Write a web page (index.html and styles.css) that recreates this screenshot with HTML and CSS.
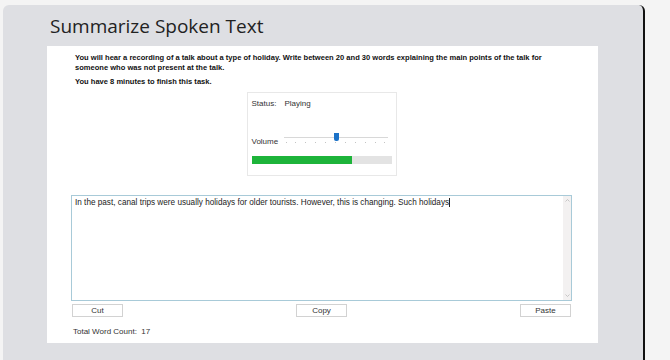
FILE: index.html
```html
<!DOCTYPE html>
<html>
<head>
<meta charset="utf-8">
<link rel="stylesheet" href="styles.css">
</head>
<body>
<div class="card">
  <h1 class="title">Summarize Spoken Text</h1>
  <div class="panel">
    <p class="instr">You will hear a recording of a talk about a type of holiday. Write between 20 and 30 words explaining the main points of the talk for someone who was not present at the talk.</p>
    <p class="instr instr-2">You have 8 minutes to finish this task.</p>
    <div class="player">
      <div class="status"><span class="status-label">Status:</span><span>Playing</span></div>
      <div class="volume">
        <span class="vol-label">Volume</span>
        <div class="slider">
          <div class="track"></div>
          <div class="ticks"><i></i><i></i><i></i><i></i><i></i><i></i><i></i><i></i><i></i><i></i><i></i></div>
          <div class="thumb"></div>
        </div>
      </div>
      <div class="progress"><div class="fill" style="width:72%"></div></div>
    </div>
    <div class="editor">
      <div class="editor-text">In the past, canal trips were usually holidays for older tourists. However, this is changing. Such holidays<span class="caret"></span></div>
      <div class="scrollbar">
        <svg class="arrow" width="5" height="3" viewBox="0 0 5 3"><path d="M0.5 2.5 L2.5 0.5 L4.5 2.5" fill="none" stroke="#bbb" stroke-width="0.8"/></svg>
        <svg class="arrow" width="5" height="3" viewBox="0 0 5 3"><path d="M0.5 0.5 L2.5 2.5 L4.5 0.5" fill="none" stroke="#bbb" stroke-width="0.8"/></svg>
      </div>
    </div>
    <div class="buttons">
      <button class="btn">Cut</button>
      <button class="btn">Copy</button>
      <button class="btn">Paste</button>
    </div>
    <div class="count">Total Word Count:&nbsp; 17</div>
  </div>
</div>
</body>
</html>
```
FILE: styles.css
```css
html, body {
  margin: 0;
  padding: 0;
  background: #f4f4f4;
  height: 360px;
  overflow: hidden;
}
.card {
  margin: 5px 0 0 3px;
  width: 642px;
  height: 355px;
  background: #dedfe3;
  border-right: 2px solid #111;
  border-radius: 6px 6px 0 0;
  padding: 0 0 0 44px;
  box-sizing: border-box;
}
.title {
  margin: 0;
  padding: 9px 0 0 3px;
  height: 32px;
  font-family: "Open Sans", sans-serif;
  font-weight: 400;
  font-size: 19px;
  line-height: 24px;
  color: #222;
}
.panel {
  width: 551px;
  height: 297px;
  background: #fff;
  box-sizing: border-box;
  padding: 7px 26px 0 24px;
  display: flex;
  flex-direction: column;
}
.instr {
  margin: 0 0 0 4px;
  max-width: 475px;
  font-family: "Liberation Sans", Arial, sans-serif;
  font-weight: bold;
  font-size: 7.55px;
  line-height: 10px;
  color: #111;
}
.instr-2 {
  margin-top: 4px;
}
.player {
  align-self: center;
  width: 150px;
  height: 84px;
  margin: 5px 0 0 0;
  border: 1px solid #e8e8e8;
  box-sizing: border-box;
  padding: 5px 5px 0 4px;
  font-family: "Liberation Sans", Arial, sans-serif;
  font-size: 8px;
  color: #333;
  display: flex;
  flex-direction: column;
}
.status {
  display: flex;
  height: 12px;
  line-height: 12px;
}
.status-label {
  width: 33px;
}
.volume {
  display: flex;
  align-items: center;
  margin-top: 24px;
  height: 14px;
}
.vol-label {
  width: 32px;
}
.slider {
  position: relative;
  width: 104px;
  height: 14px;
}
.track {
  position: absolute;
  left: 0;
  right: 0;
  top: 3px;
  height: 1px;
  background: #d8d8d8;
}
.ticks {
  position: absolute;
  left: 2px;
  right: 2px;
  top: 8px;
  display: flex;
  justify-content: space-between;
}
.ticks i {
  width: 1px;
  height: 1px;
  background: #c4c4c4;
}
.thumb {
  position: absolute;
  left: 50px;
  top: -1px;
  width: 5px;
  height: 8px;
  background: #1b72c8;
  border-radius: 0 0 2px 2px;
}
.progress {
  margin-top: 8px;
  width: 140px;
  height: 8px;
  background: #e3e3e3;
}
.fill {
  height: 100%;
  background: #1db43a;
}
.editor {
  margin-top: 19px;
  height: 106px;
  border: 1px solid #a8cad8;
  box-sizing: border-box;
  display: flex;
  background: #fff;
}
.editor-text {
  flex: 1;
  padding: 1px 0 0 3px;
  font-family: "Liberation Sans", Arial, sans-serif;
  font-size: 8.2px;
  line-height: 11px;
  color: #222;
}
.caret {
  display: inline-block;
  width: 1px;
  height: 9px;
  background: #222;
  vertical-align: -2px;
}
.scrollbar {
  width: 8px;
  background: #f3f1f1;
  display: flex;
  flex-direction: column;
  justify-content: space-between;
  align-items: center;
  padding: 3px 0;
}
.arrow {
  display: block;
}
.buttons {
  display: flex;
  justify-content: space-between;
  margin: 3px 1px 0 1px;
}
.btn {
  width: 51px;
  height: 13px;
  padding: 0;
  margin: 0;
  border: 1px solid #d2d2d2;
  background: #fff;
  font-family: "Liberation Sans", Arial, sans-serif;
  font-size: 8px;
  line-height: 11px;
  color: #333;
}
.count {
  margin: 9px 0 0 2px;
  font-family: "Liberation Sans", Arial, sans-serif;
  font-size: 8px;
  line-height: 12px;
  color: #333;
}
```
